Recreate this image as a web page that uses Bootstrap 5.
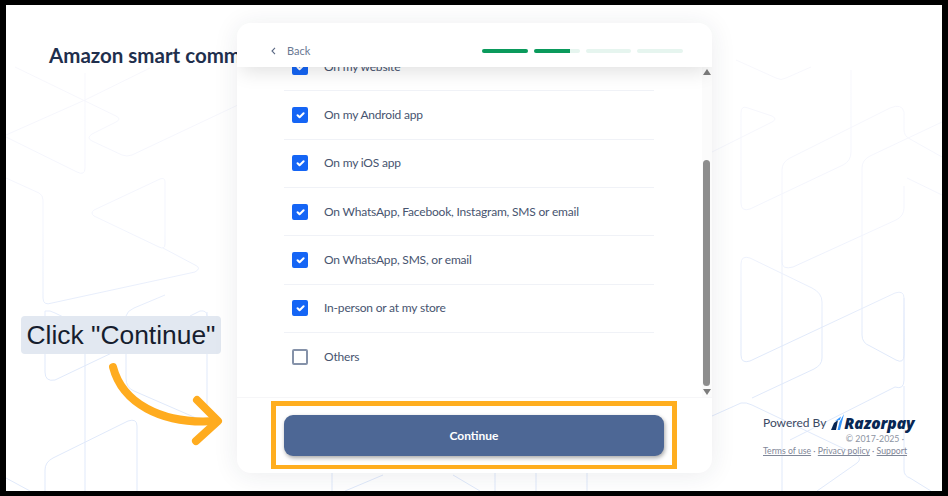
<!DOCTYPE html>
<html lang="en">
<head>
<meta charset="utf-8">
<title>Amazon smart commerce</title>
<link rel="stylesheet" href="https://cdn.jsdelivr.net/npm/bootstrap@5.3.0/dist/css/bootstrap.min.css">
<style>
html,body{margin:0;height:496px;overflow:hidden;background:#000;font-family:Lato,"Liberation Sans",sans-serif}
.shell{height:496px;border-style:solid;border-color:#000;border-width:5px 6px 5px 6px;background:#fff}
.stage{height:486px;overflow:hidden}
.pattern{left:0;top:0;z-index:0}
.side-left{width:231px;flex:none;z-index:1}
.side-right{width:230px;flex:none;z-index:1}
.page-title{margin:38px 0 0 43px;font-size:20.5px;line-height:24px;font-weight:700;color:#1f2f4d;white-space:nowrap}
.callout{margin:249px 0 0 15px;width:200px;height:38px;background:#e2e8f1;border-radius:4px;font-family:"Liberation Sans",sans-serif;font-size:26.4px;line-height:38px;color:#161d2e;text-align:center;white-space:nowrap}
.pointer{display:block;margin-top:4px}
.panel{width:475px;height:450px;margin-top:18px;flex:none;z-index:2;border-radius:14px;border:0;box-shadow:0 2px 26px rgba(30,40,70,.09);background:#fff;overflow:hidden}
.panel-head{height:44px;padding:12px 29px 0 34px;z-index:3;background:#fff;box-shadow:0 8px 20px -4px rgba(0,0,0,.13)}
.back-link{font-size:11px;color:#6a7892;gap:11px}
.steps{gap:6px}
.steps .progress{width:45.75px;height:4px;background:#e6f5ef;border-radius:2px}
.steps .progress-bar{background:#0a9a5c}
.panel-body-wrap{height:330px;overflow:hidden}
.choices{flex:1;padding:0 48px 0 47px;overflow:hidden}
.choices .list-group{margin-top:-24px}
.choice{height:48.35px;padding:0;display:flex;align-items:center;border-color:#f0f2f7;font-size:12px;letter-spacing:-.19px;color:#47546f;background:transparent}
.choice .form-check-input{width:16px;height:16px;margin:0 16px 0 8px;flex:none;border-radius:2px;border:2px solid #8592a9;background-color:#fff}
.choice .form-check-input:checked{background-color:#1565f5;border-color:#1565f5;background-size:13px}
.rail{width:10px;flex:none;background:#fbfbfb;padding-top:2px}
.rail-up,.rail-down{width:0;height:0;margin-left:1px;border-left:4px solid transparent;border-right:4px solid transparent}
.rail-up{border-bottom:6px solid #7c7c7c}
.rail-down{border-top:6px solid #7c7c7c;margin-top:3px}
.rail-gap{height:85px}
.rail-thumb{width:7px;margin-left:1px;height:226px;background:#8d8d8d;border-radius:4px}
.panel-foot{height:76px;padding:3px 35px 0 34px;border-top:1px solid #f6f6f8}
.highlight{height:68px;border:solid #ffae1f;border-width:5px 5px 4px;padding:9px 8px 0}
.go-btn{display:block;width:100%;height:41px;background:#4d6795;border:0;border-radius:9px;color:#fff;font-size:12px;font-weight:700;box-shadow:1px 2px 4px rgba(0,0,0,.35)}
.credit{padding:0 0 34px 51px;margin-top:auto}
.powered{font-size:12px;color:#3b4963;height:21px;gap:5px}
.brand{font-family:"Open Sans",sans-serif;font-style:italic;font-weight:800;font-size:15.6px;line-height:20px;color:#072654;letter-spacing:-.1px}
.copy{width:141px;text-align:right;font-size:8.8px;line-height:12px;color:#8d94a3;white-space:nowrap}
.legal{font-size:8.7px;line-height:12px;color:#7f8798;white-space:nowrap}
.legal a{color:#7f8798;text-decoration:underline}
</style>
</head>
<body>
<div class="shell">
<div class="stage d-flex position-relative">
<svg class="pattern position-absolute" width="936" height="486" viewBox="6 5 936 486" fill="none" aria-hidden="true">
<defs><linearGradient id="fade" gradientUnits="userSpaceOnUse" x1="0" y1="60" x2="0" y2="340"><stop offset="0" stop-color="#f7f7fc"/><stop offset=".6" stop-color="#f3f5fd"/><stop offset="1" stop-color="#e0e9fa"/></linearGradient></defs>
<g stroke="url(#fade)" stroke-width="1">
<path d="M15 67 L116 116 Q122 119 116 122 L92 134 Q86 138 92 141 L122 155 Q127 157 132 155 L240 104"/>
<path d="M85 73 V168 Q85 176 77 172 L6 137"/>
<path d="M6 135 L85 100 L150 68"/>
<path d="M160 179 Q165 177 165 182 V244 Q165 250 159 247 L94 216 Q90 213 94 210 Z"/>
<path d="M6 178 L39 193 Q43 195 43 200 V298 Q43 306 52 303 L195 272 Q202 268 195 265 L163 248"/>
<path d="M45 311 V372 Q45 382 55 380 L118 350"/>
<path d="M45 311 Q50 310 55 313 L80 325"/>
<path d="M85 354 V491"/>
<path d="M126 316 V378 Q126 388 134 391 L203 421"/>
<path d="M126 316 Q127 311 134 308 L165 295"/>
<path d="M207 312 V412"/>
<path d="M190 316 L200 311 Q207 310 207 316"/>
<path d="M45 491 V470 Q45 462 53 458 L128 421 Q137 418 137 426 V491"/>
<path d="M6 478 L30 491"/>
<path d="M741 113 Q741 105 748 108 L772 116 Q778 119 772 122 L712 152"/>
<path d="M741 113 V203 Q741 212 750 209 L843 165 Q851 161 851 152 V70"/>
<path d="M736 60 L776 78 Q781 81 786 78 L811 67"/>
<path d="M782 491 V170 Q782 162 790 158 L890 108 Q902 103 904 112 V130 Q904 136 910 139 L942 157"/>
<path d="M942 122 L870 156 Q862 160 862 168 V335 Q862 343 870 346 L896 360 Q904 364 904 355 V298 Q904 290 895 293 L750 361 Q741 364 741 355 V264 Q741 255 750 258 L812 288 Q822 293 822 302 V358 Q822 365 814 369 L752 398"/>
<path d="M907 178 L942 195"/>
<path d="M904 186 V208 Q904 216 896 220 L793 267 Q782 270 782 262 V250"/>
<path d="M904 298 V380 Q904 390 895 387 L790 440"/>
<path d="M712 416 L741 403 Q746 402 752 405 L857 455 Q862 459 857 463 L817 491"/>
<path d="M904 386 V470 Q904 476 910 478 L931 491"/>
<path d="M495 473 V491 M536 473 V491 M587 473 V491 M332 473 V491 M383 475 L345 491 M453 475 L480 491"/>
</g>
</svg>

<div class="side-left position-relative">
<h1 class="page-title">Amazon smart commerce</h1>
<div class="callout">Click "Continue"</div>
<svg class="pointer" width="231" height="92" viewBox="6 358 231 92" fill="none" aria-hidden="true">
<path d="M113 367 C122 402 160 425 216 421" stroke="#ffac1f" stroke-width="8" stroke-linecap="round"/>
<path d="M197 400 L218 421 L196 441" stroke="#ffac1f" stroke-width="8" stroke-linecap="round" stroke-linejoin="round"/>
</svg>
</div>

<div class="panel card">
<div class="panel-head d-flex align-items-center justify-content-between position-relative">
<div class="back-link d-flex align-items-center">
<svg width="5" height="8" viewBox="0 0 5 8" fill="none"><path d="M4 .8 1 4l3 3.2" stroke="#5c6a85" stroke-width="1.1"/></svg>
<span>Back</span>
</div>
<div class="steps d-flex">
<div class="progress"><div class="progress-bar" style="width:100%"></div></div>
<div class="progress"><div class="progress-bar" style="width:80%"></div></div>
<div class="progress"><div class="progress-bar" style="width:0%"></div></div>
<div class="progress"><div class="progress-bar" style="width:0%"></div></div>
</div>
</div>
<div class="panel-body-wrap d-flex">
<div class="choices">
<div class="list-group list-group-flush">
<label class="list-group-item choice"><input class="form-check-input" type="checkbox" checked>On my website</label>
<label class="list-group-item choice"><input class="form-check-input" type="checkbox" checked>On my Android app</label>
<label class="list-group-item choice"><input class="form-check-input" type="checkbox" checked>On my iOS app</label>
<label class="list-group-item choice"><input class="form-check-input" type="checkbox" checked>On WhatsApp, Facebook, Instagram, SMS or email</label>
<label class="list-group-item choice"><input class="form-check-input" type="checkbox" checked>On WhatsApp, SMS, or email</label>
<label class="list-group-item choice"><input class="form-check-input" type="checkbox" checked>In-person or at my store</label>
<label class="list-group-item choice"><input class="form-check-input" type="checkbox">Others</label>
</div>
</div>
<div class="rail">
<div class="rail-up"></div>
<div class="rail-gap"></div>
<div class="rail-thumb"></div>
<div class="rail-down"></div>
</div>
</div>
<div class="panel-foot">
<div class="highlight"><button class="go-btn" type="button">Continue</button></div>
</div>
</div>

<div class="side-right d-flex flex-column position-relative">
<div class="credit">
<div class="powered d-flex align-items-center">
<span>Powered By</span>
<span class="d-flex align-items-center">
<svg width="13" height="17" viewBox="0 0 13 17" aria-hidden="true"><path d="M0 16 L3 9 L7 6 L5 16 Z" fill="#072654"/><path d="M6.5 16 L8.5 8 L13 0 L9 16 Z" fill="#3395ff"/><path d="M4 7 L10 2.5 L8.8 6 Z" fill="#3395ff"/></svg>
<span class="brand">Razorpay</span>
</span>
</div>
<div class="copy">© 2017-2025 ·</div>
<div class="legal"><a href="#">Terms of use</a> · <a href="#">Privacy policy</a> · <a href="#">Support</a></div>
</div>
</div>
</div>
</div>
</body>
</html>
